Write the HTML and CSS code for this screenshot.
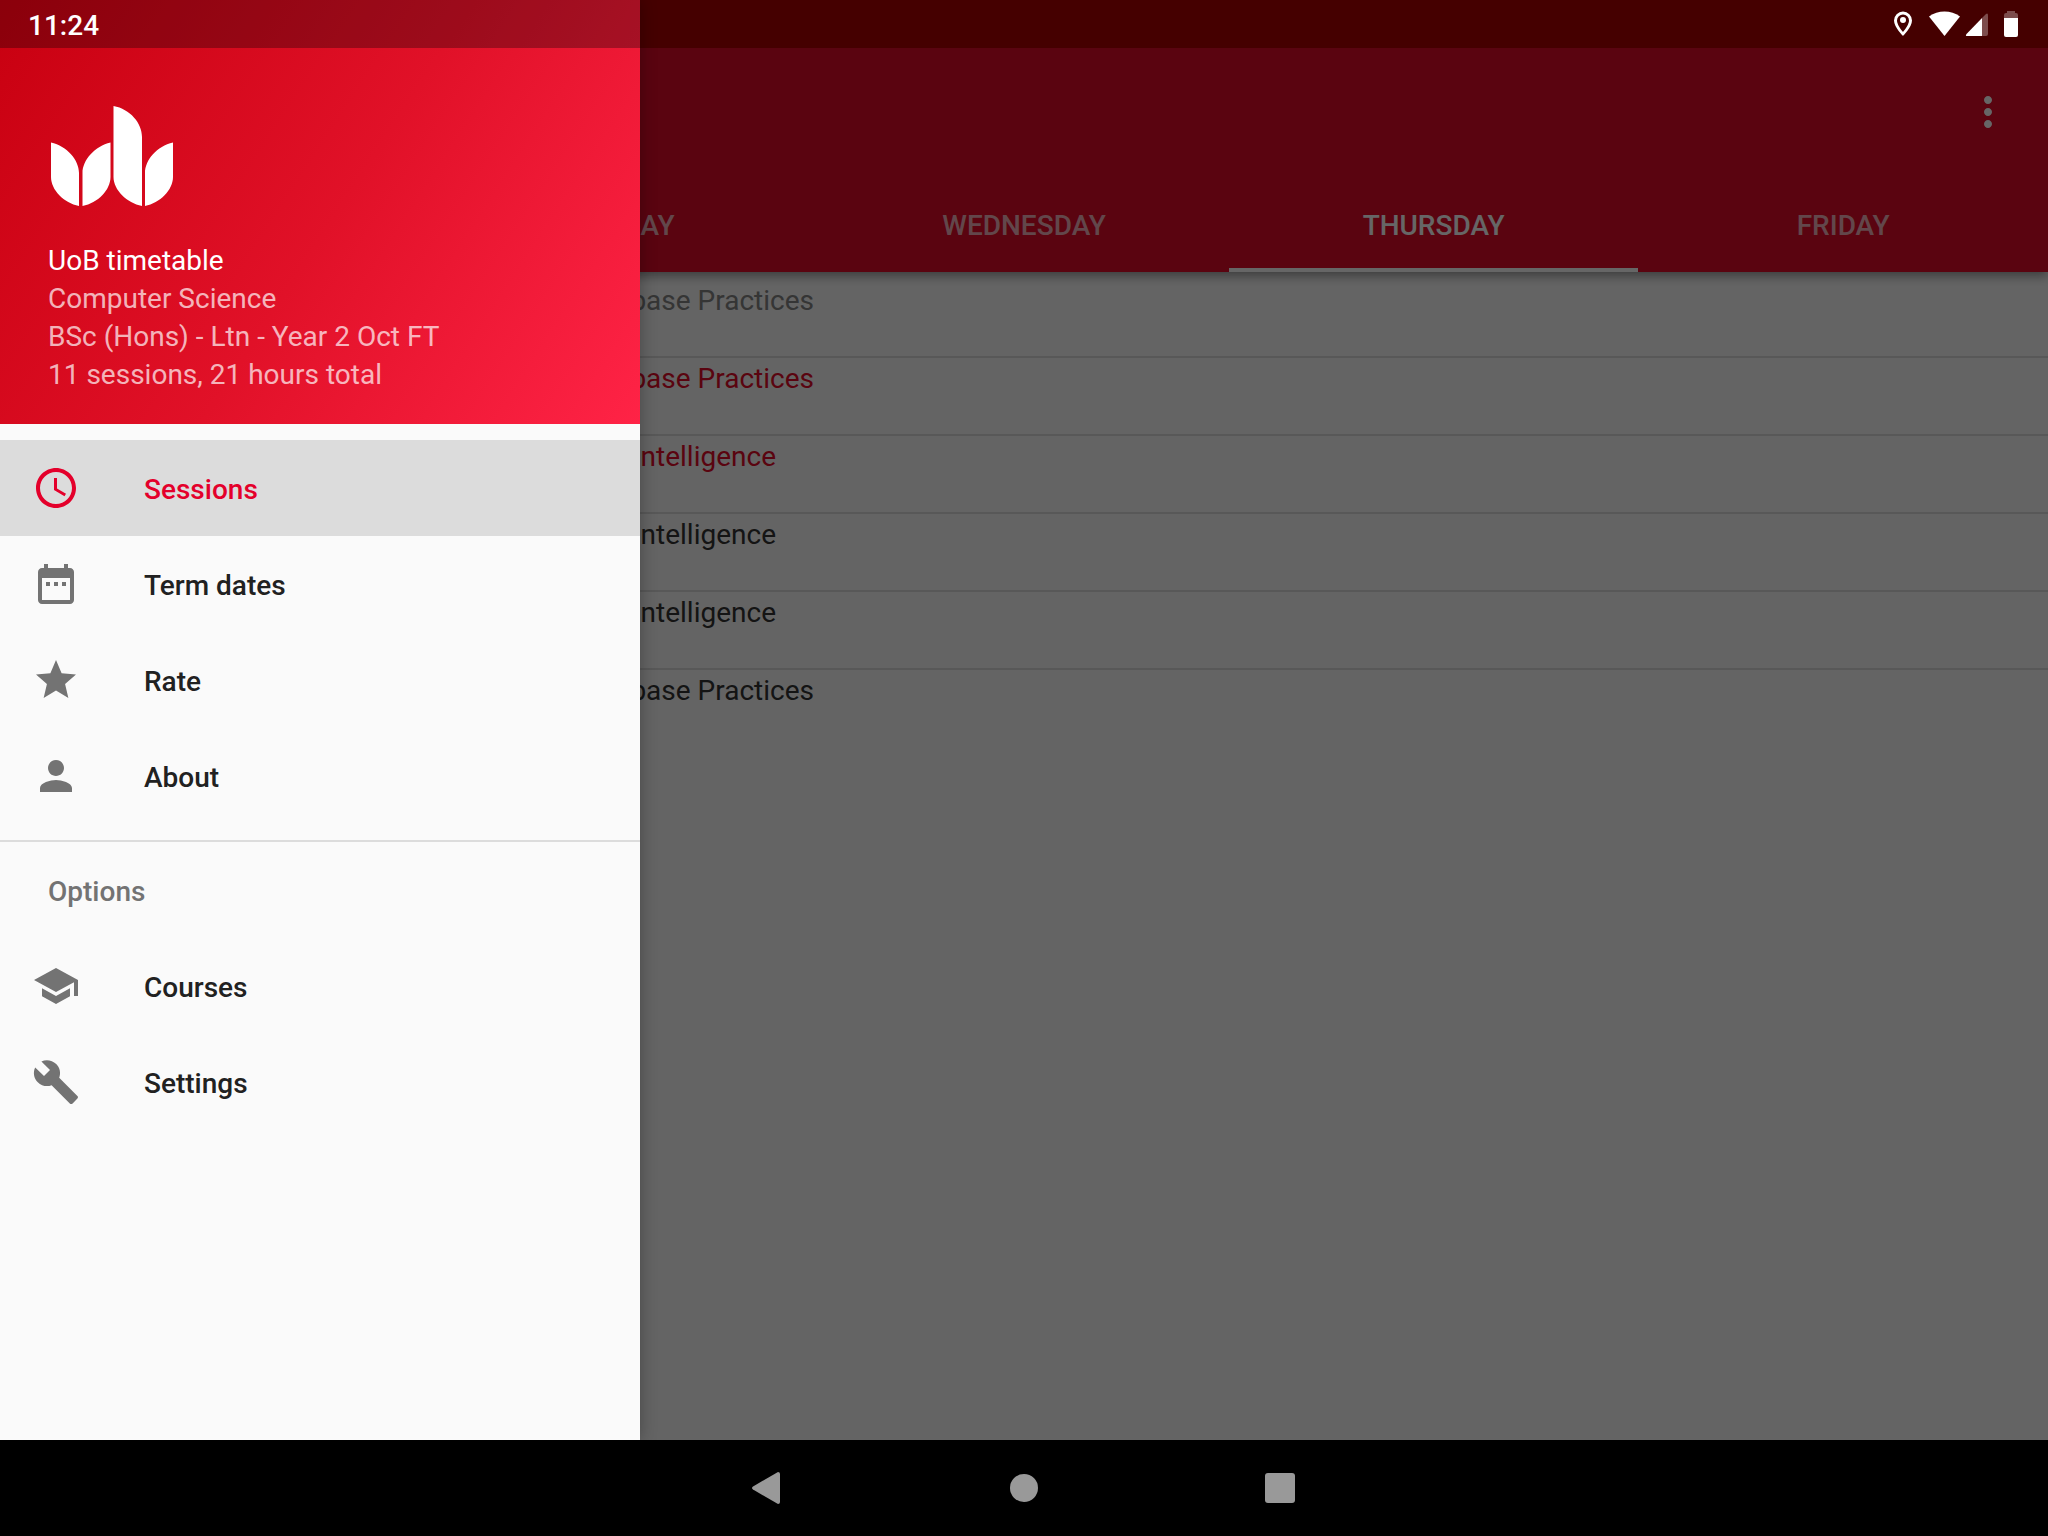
FILE: index.html
```html
<!DOCTYPE html>
<html lang="en">
<head>
<meta charset="utf-8">
<title>UoB timetable</title>
<meta name="viewport" content="width=device-width, initial-scale=1">
<link rel="stylesheet" href="styles.css">
</head>
<body>
<div class="screen">
  <div class="app">
    <header class="app-bar">
      <div class="toolbar">
        <button class="icon-button" type="button" aria-label="More options">
          <svg class="icon" viewBox="0 0 24 24"><path d="M12 8c1.100 0 2-.9 2-2s-.9-2-2-2-2 .9-2 2 .9 2 2 2zm0 2c-1.100 0-2 .9-2 2s.9 2 2 2 2-.9 2-2-.9-2-2-2zm0 6c-1.100 0-2 .9-2 2s.9 2 2 2 2-.9 2-2-.9-2-2-2z"/></svg>
        </button>
      </div>
      <nav class="tabs">
        <button class="tab" type="button">MONDAY</button>
        <button class="tab" type="button">TUESDAY</button>
        <button class="tab" type="button">WEDNESDAY</button>
        <button class="tab tab-active" type="button">THURSDAY</button>
        <button class="tab" type="button">FRIDAY</button>
      </nav>
    </header>
    <ul class="sessions">
      <li class="session session-past"><span class="title title-long">Database Practices</span></li>
      <li class="session session-now"><span class="title title-long">Database Practices</span></li>
      <li class="session session-now"><span class="title">Artificial Intelligence</span></li>
      <li class="session"><span class="title">Artificial Intelligence</span></li>
      <li class="session"><span class="title">Artificial Intelligence</span></li>
      <li class="session"><span class="title title-long">Database Practices</span></li>
    </ul>
    <div class="scrim"></div>
    <aside class="drawer">
      <header class="drawer-header">
        <svg class="logo" viewBox="0 0 122 100" role="img" aria-label="UoB"><path d="M0 36.500C16 40 28 54 28 67V100C13 97 0 84 0 71zM59.500 36.500C44 40 31.500 54 31.500 67V100C47 97 59.500 84 59.500 71zM62.500 0C79 3 91 17 91 31V100C76 97 62.500 84 62.500 71zM122 36.500C106 40 94 54 94 67V100C109 97 122 84 122 71z"/></svg>
        <p class="app-name">UoB timetable</p>
        <p class="detail">Computer Science</p>
        <p class="detail">BSc (Hons) - Ltn - Year 2 Oct FT</p>
        <p class="detail">11 sessions, 21 hours total</p>
      </header>
      <nav class="menu">
        <a class="item item-active" href="#sessions"><svg class="icon" viewBox="0 0 24 24"><path d="M11.990 2C6.470 2 2 6.480 2 12s4.470 10 9.990 10C17.520 22 22 17.520 22 12S17.520 2 11.990 2zM12 20c-4.420 0-8-3.580-8-8s3.580-8 8-8 8 3.580 8 8-3.580 8-8 8zm.5-13H11v6l5.250 3.150.75-1.230-4.500-2.670z"/></svg><span class="label">Sessions</span></a>
        <a class="item" href="#terms"><svg class="icon" viewBox="0 0 24 24"><path d="M9 11H7v2h2v-2zm4 0h-2v2h2v-2zm4 0h-2v2h2v-2zm2-7h-1V2h-2v2H8V2H6v2H5c-1.110 0-1.990.9-1.990 2L3 20c0 1.100.89 2 2 2h14c1.100 0 2-.9 2-2V6c0-1.100-.9-2-2-2zm0 16H5V9h14v11z"/></svg><span class="label">Term dates</span></a>
        <a class="item" href="#rate"><svg class="icon" viewBox="0 0 24 24"><path d="M12 17.270L18.180 21l-1.640-7.030L22 9.240l-7.190-.61L12 2 9.190 8.630 2 9.240l5.460 4.730L5.820 21z"/></svg><span class="label">Rate</span></a>
        <a class="item" href="#about"><svg class="icon" viewBox="0 0 24 24"><path d="M12 12c2.210 0 4-1.790 4-4s-1.790-4-4-4-4 1.790-4 4 1.790 4 4 4zm0 2c-2.670 0-8 1.340-8 4v2h16v-2c0-2.660-5.330-4-8-4z"/></svg><span class="label">About</span></a>
        <h2 class="group">Options</h2>
        <a class="item" href="#courses"><svg class="icon" viewBox="0 0 24 24"><path d="M5 13.180v4L12 21l7-3.820v-4L12 17l-7-3.820zM12 3L1 9l11 6 9-4.910V17h2V9L12 3z"/></svg><span class="label">Courses</span></a>
        <a class="item" href="#settings"><svg class="icon" viewBox="0 0 24 24"><path d="M22.700 19l-9.100-9.100c.9-2.300.4-5-1.500-6.900-2-2-5-2.400-7.400-1.300L9 6 6 9 1.600 4.700C.4 7.100.9 10.100 2.900 12.100c1.900 1.900 4.600 2.400 6.900 1.500l9.100 9.100c.4.4 1 .4 1.400 0l2.300-2.300c.5-.4.5-1.100.1-1.400z"/></svg><span class="label">Settings</span></a>
      </nav>
    </aside>
    <div class="status-bar">
      <time class="clock">11:24</time>
      <svg class="status-icons" viewBox="0 0 128 28" role="img" aria-label="Location on, Wi-Fi, mobile signal, battery">
        <path fill-rule="evenodd" d="M11 1.500a9 9 0 0 0-9 9C2 17 11 26 11 26s9-9 9-15.500a9 9 0 0 0-9-9zm0 3a6 6 0 0 1 6 6c0 3.500-3.500 8.500-6 11.500-2.500-3-6-8-6-11.500a6 6 0 0 1 6-6z"/>
        <circle cx="11" cy="10" r="3"/>
        <path d="M37 6.500Q44 1.500 52.500 1.500T68 6.500L52.500 26z"/>
        <path class="dim" d="M90 8V26H94Q96 26 96 24V5.500Q96 2.500 94 4z"/>
        <path d="M90 8V26H75Q73 26 74.500 24z"/>
        <path class="dim" d="M112 8V5Q112 3 114 3h1V1h8v2h1q2 0 2 2v3z"/>
        <path d="M112 8h14v17q0 2-2 2h-10q-2 0-2-2z"/>
      </svg>
    </div>
  </div>
  <nav class="system-nav">
    <button class="system-button" type="button" aria-label="Back"><svg class="system-icon" viewBox="0 0 32 32"><path d="M26 0Q28 0 28 2V30Q28 32 26 32L1 17.500Q-1 16 1 14.500z"/></svg></button>
    <button class="system-button" type="button" aria-label="Home"><svg class="system-icon" viewBox="0 0 32 32"><circle cx="16" cy="16" r="14"/></svg></button>
    <button class="system-button" type="button" aria-label="Recent apps"><svg class="system-icon" viewBox="0 0 32 32"><rect x="1" y="1" width="30" height="30" rx="3"/></svg></button>
  </nav>
</div>
</body>
</html>
```
FILE: styles.css
```css
* {
  box-sizing: border-box;
}

body {
  margin: 0;
  font: 400 28px/38px Roboto, "Liberation Sans", sans-serif;
  color: #212121;
  background: #fafafa;
}

p, h2, ul {
  margin: 0;
  padding: 0;
}

button {
  padding: 0;
  border: 0;
  font: inherit;
  color: inherit;
  background: none;
}

svg {
  display: block;
  fill: currentColor;
}

.screen {
  display: flex;
  flex-direction: column;
  min-height: 100vh;
}

.app {
  position: relative;
  flex: 1;
  overflow: hidden;
}

.app-bar {
  position: relative;
  padding-top: 48px;
  color: #fff;
  background: linear-gradient(#ad0000 48px, #e00a28 48px);
  box-shadow: 0 4px 10px rgba(0, 0, 0, .4);
}

.toolbar {
  display: flex;
  justify-content: flex-end;
  align-items: center;
  height: 128px;
  padding-right: 36px;
}

.icon {
  flex: none;
  width: 48px;
  height: 48px;
}

.tabs {
  display: grid;
  grid-template-columns: repeat(5, 1fr);
}

.tab {
  height: 96px;
  padding-top: 4px;
  border: solid transparent;
  border-width: 4px 0;
  font-weight: 500;
  color: rgba(255, 255, 255, .7);
}

.tab-active {
  color: #fff;
  border-bottom-color: #fff;
}

.sessions {
  padding-top: 8px;
  list-style: none;
  color: #323232;
}

.session {
  height: 78px;
  border-bottom: 2px solid #dcdcdc;
}

.session:last-child {
  border-bottom: 0;
}

.session-past {
  color: #848484;
}

.session-now {
  color: #e00a28;
}

.title {
  display: block;
  width: 776px;
  line-height: 42px;
  text-align: right;
}

.title-long {
  width: 814px;
}

.scrim {
  position: absolute;
  inset: 0;
  background: rgba(0, 0, 0, .6);
}

.drawer {
  position: absolute;
  inset: 0 auto 0 0;
  width: 640px;
  background: #fafafa;
  box-shadow: 0 0 16px rgba(0, 0, 0, .3);
}

.drawer-header {
  padding: 106px 48px 30px;
  color: #fff;
  background: linear-gradient(123deg, #c80010, #e11128 52%, #ff2346);
}

.logo {
  width: 122px;
  height: 100px;
  margin: 0 3px 36px;
}

.detail {
  color: rgba(255, 255, 255, .7);
}

.menu {
  padding-top: 16px;
  font-weight: 500;
}

.item {
  display: flex;
  align-items: center;
  gap: 64px;
  height: 96px;
  padding: 0 32px;
  color: #212121;
  text-decoration: none;
}

.item .icon {
  color: #737373;
}

.label {
  padding-top: 4px;
}

.item-active, .item-active .icon {
  color: #e4002b;
}

.item-active {
  background: #dcdcdc;
}

.group {
  margin-top: 16px;
  padding: 4px 48px 0;
  border-top: 2px solid #dcdcdc;
  font-size: 28px;
  font-weight: 500;
  line-height: 92px;
  color: #737373;
}

.status-bar {
  position: absolute;
  inset: 0 0 auto;
  display: flex;
  justify-content: space-between;
  align-items: center;
  height: 48px;
  padding: 0 28px;
  color: #fff;
}

.status-bar::before {
  content: "";
  position: absolute;
  inset: 0 auto 0 0;
  width: 640px;
  background: rgba(0, 0, 0, .3);
}

.clock {
  position: relative;
  padding-top: 4px;
  font-weight: 500;
}

.status-icons {
  width: 128px;
  height: 28px;
}

.dim {
  opacity: .3;
}

.system-nav {
  display: flex;
  justify-content: center;
  gap: 160px;
  height: 96px;
  background: #000;
  color: #999;
}

.system-button {
  display: grid;
  place-items: center;
  width: 96px;
}

.system-icon {
  width: 32px;
  height: 32px;
}
```
